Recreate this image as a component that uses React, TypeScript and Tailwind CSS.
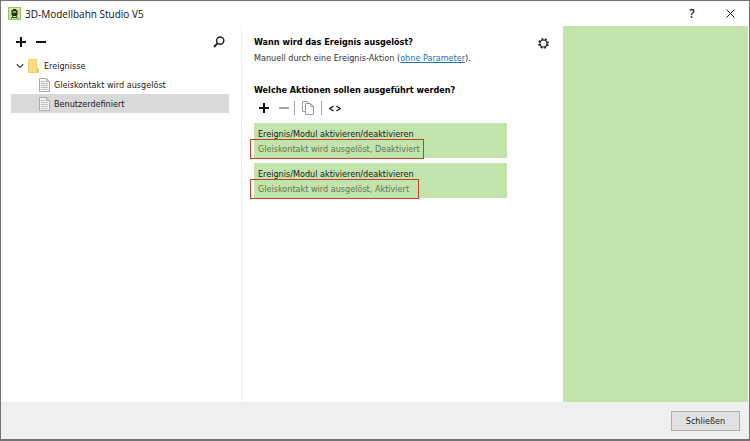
import type { ReactNode } from 'react';

interface TreeItemProps {
  label: string;
  selected?: boolean;
}

interface Action {
  title: string;
  detail: string;
  wideMark?: boolean;
}

const events: TreeItemProps[] = [
  { label: 'Gleiskontakt wird ausgelöst' },
  { label: 'Benutzerdefiniert', selected: true },
];

const actions: Action[] = [
  { title: 'Ereignis/Modul aktivieren/deaktivieren', detail: 'Gleiskontakt wird ausgelöst, Deaktiviert' },
  { title: 'Ereignis/Modul aktivieren/deaktivieren', detail: 'Gleiskontakt wird ausgelöst, Aktiviert', wideMark: true },
];

function IconButton({ label, disabled, children }: { label: string; disabled?: boolean; children: ReactNode }) {
  return (
    <button type="button" aria-label={label} disabled={disabled} className="flex h-4 w-5 items-center justify-center">
      {children}
    </button>
  );
}

function PlusIcon() {
  return (
    <svg className="h-3 w-3" viewBox="0 0 12 12" stroke="#111" strokeWidth="2" aria-hidden="true">
      <path d="M6 1v10M1 6h10" />
    </svg>
  );
}

function MinusIcon({ color = '#111' }: { color?: string }) {
  return (
    <svg className="h-3 w-3" viewBox="0 0 12 12" stroke={color} strokeWidth="2" aria-hidden="true">
      <path d="M1 6h10" />
    </svg>
  );
}

function SearchIcon() {
  return (
    <svg className="h-3 w-3" viewBox="0 0 12 12" fill="none" stroke="#222" aria-hidden="true">
      <circle cx="7.2" cy="4.6" r="3.6" strokeWidth="1.5" />
      <path d="M4.4 7.4L1 11" strokeWidth="2" />
    </svg>
  );
}

function TrainIcon() {
  return (
    <svg className="h-[13px] w-[13px]" viewBox="0 0 13 13" aria-hidden="true">
      <rect x="0.5" y="0.5" width="12" height="12" fill="#c4e387" stroke="#a3bf6c" />
      <rect x="2" y="1" width="9" height="9" fill="#d5eda2" />
      <path d="M5 2h3v1h1.500v5l-1 1h-4l-1-1V3H5z" fill="#25301b" />
      <path d="M4.800 4h3.400v2H4.800z" fill="#91a66a" />
      <path d="M4.800 9L3.500 11.500M8.200 9l1.300 2.500M4.500 10.500h4" stroke="#38452a" />
    </svg>
  );
}

function FolderIcon() {
  return (
    <svg className="h-[14px] w-[11px]" viewBox="0 0 11 14" aria-hidden="true">
      <path d="M0.500 0.500h8v8l2 1v4h-10z" fill="#fbdd83" stroke="#efcc6c" />
      <path d="M8.500 8.500l2 1v4h-2z" fill="#f0ca66" />
    </svg>
  );
}

function PageIcon() {
  return (
    <svg className="h-[14px] w-[11px]" viewBox="0 0 11 14" aria-hidden="true">
      <path d="M0.500 0.500h7l3 3v10h-10z" fill="#f4f4f4" stroke="#ababab" />
      <path d="M7.500 0.500v3h3" fill="#ddd" stroke="#ababab" />
      <path d="M2 3.500h4M2 5.500h7M2 7.500h7M2 9.500h7M2 11.500h7" stroke="#c2c2c2" />
    </svg>
  );
}

function CopyIcon() {
  return (
    <svg className="h-[14px] w-3" viewBox="0 0 12 14" fill="none" stroke="#9a9a9a" aria-hidden="true">
      <path d="M3 10.500H0.500v-10h5l2 2" />
      <path d="M3.500 2.500h5l3 3v8h-8z" fill="#fff" />
      <path d="M8.500 2.500v3h3" />
    </svg>
  );
}

function CodeIcon() {
  return (
    <svg className="h-[7px] w-3" viewBox="0 0 12 7" fill="none" stroke="#111" strokeWidth="1.300" aria-hidden="true">
      <path d="M4.500 1L0.800 3.500l3.700 2.500M7.500 1l3.700 2.500L7.500 6" />
    </svg>
  );
}

function GearIcon() {
  return (
    <svg className="h-[11px] w-[11px]" viewBox="0 0 11 11" aria-hidden="true">
      <circle cx="5.500" cy="5.500" r="4.500" fill="none" stroke="#222" strokeWidth="1.800" strokeDasharray="1.767 1.767" strokeDashoffset="2.650" />
      <circle cx="5.500" cy="5.500" r="3.500" fill="#fff" stroke="#222" strokeWidth="1.200" />
    </svg>
  );
}

function Separator() {
  return <div className="h-[14px] w-px bg-[#a5a5a5]" aria-hidden="true" />;
}

function TitleBar() {
  return (
    <header className="flex h-[25px] items-center pr-[9px] pl-[7px]">
      <TrainIcon />
      <h1 className="ml-1 flex-1 font-['Open_Sans',sans-serif] text-[10px] text-[#111]">3D-Modellbahn Studio V5</h1>
      <button type="button" aria-label="Hilfe" className="mr-5 w-4 font-['Open_Sans',sans-serif] text-xs font-semibold">
        ?
      </button>
      <button type="button" aria-label="Fenster schließen" className="flex w-5 justify-center">
        <svg className="h-[9px] w-[9px]" viewBox="0 0 9 9" stroke="#222" aria-hidden="true">
          <path d="M0.500 0.500l8 8M8.500 0.500l-8 8" />
        </svg>
      </button>
    </header>
  );
}

function TreeItem({ label, selected }: TreeItemProps) {
  return (
    <li className={selected ? 'flex h-[19px] items-center bg-[#d9d9d9] pl-7' : 'flex h-[19px] items-center pl-7'}>
      <PageIcon />
      <span className="ml-1">{label}</span>
    </li>
  );
}

function EventTree() {
  return (
    <aside className="w-[241px] shrink-0 border-r border-[#f0f0f0] pt-2 pr-3 pl-[10px]">
      <div className="flex">
        <IconButton label="Ereignis hinzufügen"><PlusIcon /></IconButton>
        <IconButton label="Ereignis entfernen"><MinusIcon /></IconButton>
        <div className="flex-1" />
        <IconButton label="Suchen"><SearchIcon /></IconButton>
      </div>
      <ul className="mt-1.5">
        <li>
          <div className="flex h-[19px] items-center pl-[5px]">
            <svg className="mr-1 h-2 w-2" viewBox="0 0 8 8" fill="none" stroke="#444" strokeWidth="1.300" aria-hidden="true">
              <path d="M0.800 2.200L4 5.400l3.200-3.200" />
            </svg>
            <FolderIcon />
            <span className="ml-[5px]">Ereignisse</span>
          </div>
          <ul>
            {events.map((event) => (
              <TreeItem key={event.label} {...event} />
            ))}
          </ul>
        </li>
      </ul>
    </aside>
  );
}

function ActionCard({ title, detail, wideMark }: Action) {
  return (
    <li className="bg-[#c3e3ac] px-1 pt-1 pb-px">
      <p className="leading-[14px]">{title}</p>
      <div className="relative w-fit leading-4 text-[#617653]">
        {detail}
        <span
          className={
            wideMark
              ? 'absolute -inset-y-0.5 -right-2.5 -left-2 border border-[#b9472d]'
              : 'absolute -inset-y-0.5 -right-1 -left-2 border border-[#b9472d]'
          }
          aria-hidden="true"
        />
      </div>
    </li>
  );
}

function EventDetails() {
  return (
    <section className="min-w-0 flex-1 pt-2 pr-[14px] pl-3">
      <div className="flex items-start justify-between">
        <div>
          <h2 className="leading-4 font-bold text-black">Wann wird das Ereignis ausgelöst?</h2>
          <p className="text-[#333]">
            Manuell durch eine Ereignis-Aktion (<a href="#parameter" className="text-[#2475ae] underline">ohne Parameter</a>).
          </p>
        </div>
        <button type="button" aria-label="Einstellungen" className="mt-px flex h-4 items-center">
          <GearIcon />
        </button>
      </div>

      <h2 className="mt-4 leading-4 font-bold text-black">Welche Aktionen sollen ausgeführt werden?</h2>
      <div className="mt-0.5 flex h-4 items-center">
        <IconButton label="Aktion hinzufügen"><PlusIcon /></IconButton>
        <IconButton label="Aktion entfernen" disabled><MinusIcon color="#a5a5a5" /></IconButton>
        <Separator />
        <div className="mx-[3px]"><IconButton label="Aktion kopieren" disabled><CopyIcon /></IconButton></div>
        <Separator />
        <div className="ml-[3px]"><IconButton label="Skript anzeigen"><CodeIcon /></IconButton></div>
      </div>

      <ul className="mt-[7px] mr-[42px] space-y-[5px]">
        {actions.map((action) => (
          <ActionCard key={action.detail} {...action} />
        ))}
      </ul>
    </section>
  );
}

export default function App() {
  return (
    <div className="flex min-h-screen flex-col border border-b-2 border-[#747170] bg-white font-['DejaVu_Sans_Condensed','DejaVu_Sans',sans-serif] text-[9px] leading-4 text-[#1a1a1a]">
      <TitleBar />
      <main className="flex flex-1 pr-px">
        <EventTree />
        <EventDetails />
        <div className="w-[185px] shrink-0 bg-[#c3e3ac]" />
      </main>
      <footer className="flex h-[37px] items-center justify-end bg-[#efefef] pr-[9px]">
        <button type="button" className="h-5 w-[69px] border border-[#adadad] bg-[#e1e1e1]">
          Schließen
        </button>
      </footer>
    </div>
  );
}
